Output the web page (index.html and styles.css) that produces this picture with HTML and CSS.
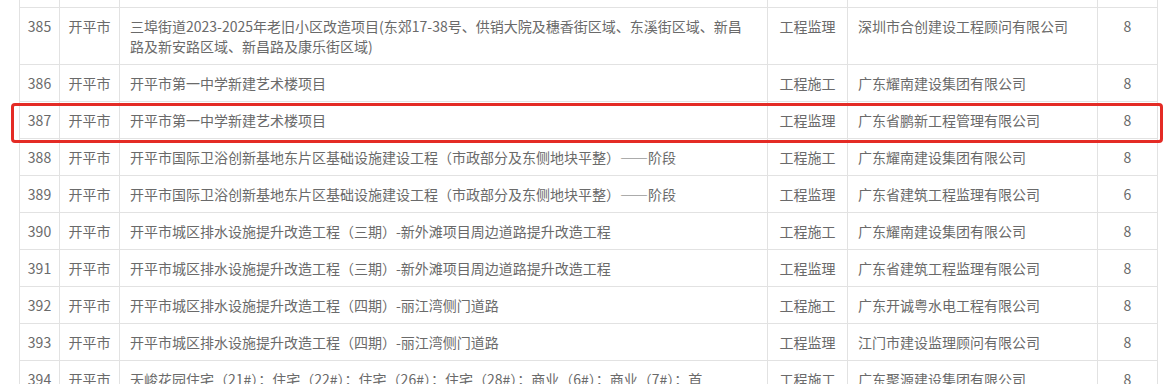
FILE: index.html
```html
<!DOCTYPE html>
<html lang="zh-CN">
<head>
<meta charset="utf-8">
<link rel="stylesheet" href="styles.css">
</head>
<body>
<div class="wrap">
<table class="grid">
<colgroup>
<col class="c-no"><col class="c-city"><col class="c-name"><col class="c-type"><col class="c-comp"><col class="c-score">
</colgroup>
<tbody>
<tr class="spacer"><td></td><td></td><td></td><td></td><td></td><td></td></tr>
<tr><td class="ctr">385</td><td class="ctr">开平市</td><td>三埠街道2023-2025年老旧小区改造项目(东郊17-38号、供销大院及穗香街区域、东溪街区域、新昌<br>路及新安路区域、新昌路及康乐街区域)</td><td class="ctr">工程监理</td><td>深圳市合创建设工程顾问有限公司</td><td class="ctr">8</td></tr>
<tr><td class="ctr">386</td><td class="ctr">开平市</td><td>开平市第一中学新建艺术楼项目</td><td class="ctr">工程施工</td><td>广东耀南建设集团有限公司</td><td class="ctr">8</td></tr>
<tr><td class="ctr">387</td><td class="ctr">开平市</td><td>开平市第一中学新建艺术楼项目</td><td class="ctr">工程监理</td><td>广东省鹏新工程管理有限公司</td><td class="ctr">8</td></tr>
<tr><td class="ctr">388</td><td class="ctr">开平市</td><td>开平市国际卫浴创新基地东片区基础设施建设工程（市政部分及东侧地块平整）——阶段</td><td class="ctr">工程施工</td><td>广东耀南建设集团有限公司</td><td class="ctr">8</td></tr>
<tr><td class="ctr">389</td><td class="ctr">开平市</td><td>开平市国际卫浴创新基地东片区基础设施建设工程（市政部分及东侧地块平整）——阶段</td><td class="ctr">工程监理</td><td>广东省建筑工程监理有限公司</td><td class="ctr">6</td></tr>
<tr><td class="ctr">390</td><td class="ctr">开平市</td><td>开平市城区排水设施提升改造工程（三期）-新外滩项目周边道路提升改造工程</td><td class="ctr">工程施工</td><td>广东耀南建设集团有限公司</td><td class="ctr">8</td></tr>
<tr><td class="ctr">391</td><td class="ctr">开平市</td><td>开平市城区排水设施提升改造工程（三期）-新外滩项目周边道路提升改造工程</td><td class="ctr">工程监理</td><td>广东省建筑工程监理有限公司</td><td class="ctr">8</td></tr>
<tr><td class="ctr">392</td><td class="ctr">开平市</td><td>开平市城区排水设施提升改造工程（四期）-丽江湾侧门道路</td><td class="ctr">工程施工</td><td>广东开诚粤水电工程有限公司</td><td class="ctr">8</td></tr>
<tr><td class="ctr">393</td><td class="ctr">开平市</td><td>开平市城区排水设施提升改造工程（四期）-丽江湾侧门道路</td><td class="ctr">工程监理</td><td>江门市建设监理顾问有限公司</td><td class="ctr">8</td></tr>
<tr><td class="ctr">394</td><td class="ctr">开平市</td><td>天峻花园住宅（21#）；住宅（22#）；住宅（26#）；住宅（28#）；商业（6#）；商业（7#）；首<br>层商铺及地下室</td><td class="ctr">工程施工</td><td>广东聚源建设集团有限公司</td><td class="ctr">8</td></tr>
</tbody>
</table>
<div class="mark"></div>
</div>
</body>
</html>
```
FILE: styles.css
```css
html, body {
  margin: 0;
  padding: 0;
  background: #fff;
  overflow: hidden;
}
.wrap {
  position: relative;
  width: 1170px;
  height: 384px;
  overflow: hidden;
}
.grid {
  margin-top: -30px;
  margin-left: 19px;
  border-collapse: collapse;
  table-layout: fixed;
  width: 1139px;
  font-family: "Noto Sans CJK SC", "Microsoft YaHei", sans-serif;
  font-size: 14px;
  line-height: 20px;
  color: #6a6a6a;
}
.c-no { width: 40px; }
.c-city { width: 60px; }
.c-name { width: 648px; }
.c-type { width: 80px; }
.c-comp { width: 250px; }
.c-score { width: 60px; }
.grid td {
  border: 1px solid #e2e2e2;
  padding: 8px 10px;
  vertical-align: top;
  height: 20px;
}
.grid td.ctr {
  text-align: center;
  padding-left: 0;
  padding-right: 0;
}
.mark {
  position: absolute;
  left: 11px;
  top: 103px;
  width: 1146px;
  height: 34px;
  border: 3px solid #e42b25;
  border-radius: 4px;
}
```
